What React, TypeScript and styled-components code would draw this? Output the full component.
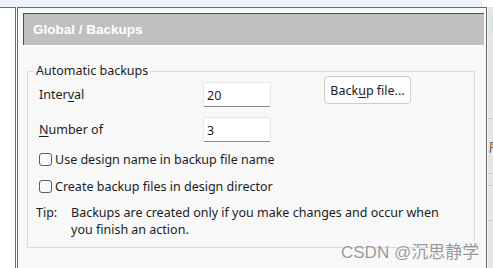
import styled, { createGlobalStyle } from 'styled-components'

const GlobalStyle = createGlobalStyle`
  html, body {
    margin: 0;
    padding: 0;
    background: #ffffff;
  }
  body {
    width: 493px;
    height: 268px;
    overflow: hidden;
    font-family: "Noto Sans", "Open Sans", sans-serif;
  }
`

function Checkbox({ label }: { label: string }) {
  return (
    <CheckRow>
      <CheckBox type="checkbox" />
      <span>{label}</span>
    </CheckRow>
  )
}

export default function App() {
  return (
    <Screen>
      <GlobalStyle />
      <TopStrip />
      <Main>
        <LeftPane />
        <Divider />
        <Dialog>
          <Header>
            <HeaderTitle>Global / Backups</HeaderTitle>
          </Header>
          <GroupBox>
            <Legend>Automatic backups</Legend>
            <FieldsRow>
              <Fields>
                <FieldRow>
                  <FieldLabel>
                    Inter<u>v</u>al
                  </FieldLabel>
                  <TextInput defaultValue="20" />
                </FieldRow>
                <FieldRow>
                  <FieldLabel>
                    <u>N</u>umber of
                  </FieldLabel>
                  <TextInput defaultValue="3" />
                </FieldRow>
              </Fields>
              <Button>
                Back<u>u</u>p file...
              </Button>
            </FieldsRow>
            <Checkbox label="Use design name in backup file name" />
            <Checkbox label="Create backup files in design director" />
            <TipRow>
              <TipLabel>Tip:</TipLabel>
              <TipText>
                Backups are created only if you make changes and occur when
                you finish an action.
              </TipText>
            </TipRow>
          </GroupBox>
        </Dialog>
        <RightStrip>
          <GreenBand />
          <StripCell $height={83} />
          <StripCell $height={54}>
            <StripGlyph>序</StripGlyph>
          </StripCell>
          <StripCell $height={11} />
          <StripCell $height={34} />
        </RightStrip>
      </Main>
      <Watermark>CSDN @沉思静学</Watermark>
    </Screen>
  )
}

const Screen = styled.div`
  position: relative;
  width: 493px;
  height: 268px;
  overflow: hidden;
  display: flex;
  flex-direction: column;
  color: #1c1c24;
  font-size: 12.5px;
`

const TopStrip = styled.div`
  height: 7px;
  flex: none;
  background: #eef2fa;
  margin-right: 11px;
  border-right: 1px solid #e0e3ea;
`

const Main = styled.div`
  flex: 1;
  display: flex;
  min-height: 0;
`

const LeftPane = styled.div`
  width: 15px;
  flex: none;
  background: #ffffff;
  border-top: 1px solid #707070;
  border-right: 1px solid #6a6a6a;
`

const Divider = styled.div`
  width: 1px;
  flex: none;
  background: #ffffff;
`

const Dialog = styled.section`
  width: 461px;
  flex: none;
  background: #f8f8f8;
  border: 1px solid #6a6a6a;
  border-bottom: none;
  padding: 5px 2px 0 5px;
  display: flex;
  flex-direction: column;
`

const Header = styled.div`
  height: 32px;
  box-sizing: border-box;
  background: #c0c0c0;
  border-top: 1px solid #505050;
  border-left: 1px solid #505050;
  display: flex;
  align-items: center;
  padding: 0 0 1px 9px;
`

const HeaderTitle = styled.div`
  color: #ffffff;
  font-family: "Liberation Sans", Arial, sans-serif;
  font-weight: 700;
  font-size: 13.5px;
`

const GroupBox = styled.fieldset`
  margin: 18px 9px 0 4px;
  padding: 0 0 9px 0;
  border: 1px solid #dcdcdc;
  min-width: 0;
  display: flex;
  flex-direction: column;
`

const Legend = styled.legend`
  margin-left: 6px;
  padding: 0 2px;
  line-height: 16px;
  font-size: 12.5px;
`

const FieldsRow = styled.div`
  display: flex;
  align-items: flex-start;
  padding-left: 11px;
  margin-top: -3px;
`

const Fields = styled.div`
  display: flex;
  flex-direction: column;
  gap: 10px;
  padding-top: 6px;
`

const FieldRow = styled.div`
  display: flex;
  align-items: center;
  height: 25px;
`

const FieldLabel = styled.label`
  width: 164px;
  line-height: 16px;
  padding-top: 1px;

  u {
    text-underline-offset: 2px;
  }
`

const TextInput = styled.input`
  box-sizing: border-box;
  width: 68px;
  height: 25px;
  margin: 0;
  padding: 1px 3px 0;
  background: #ffffff;
  border: 1px solid #e6e6e6;
  border-bottom: 1px solid #8a8a8a;
  border-radius: 2px;
  font-family: "Noto Sans", sans-serif;
  font-size: 12.5px;
  color: #1c1c24;
  outline: none;
`

const Button = styled.button`
  box-sizing: border-box;
  margin-left: 53px;
  width: 87px;
  height: 28px;
  padding: 0;
  background: #fdfdfd;
  border: 1px solid #cdcdcd;
  border-radius: 4px;
  font-family: "Noto Sans", sans-serif;
  font-size: 12.5px;
  color: #1c1c24;

  u {
    text-underline-offset: 2px;
  }
`

const CheckRow = styled.label`
  display: flex;
  align-items: center;
  gap: 3px;
  height: 16px;
  padding-left: 11px;
  margin-top: 9px;

  & + & {
    margin-top: 11px;
  }
`

const CheckBox = styled.input`
  appearance: none;
  box-sizing: border-box;
  width: 13px;
  height: 13px;
  margin: 0;
  border: 1px solid #5c5c5c;
  border-radius: 3px;
  background: #fafafa;
`

const TipRow = styled.div`
  display: flex;
  margin-top: 10px;
  padding-left: 8px;
  line-height: 17px;
`

const TipLabel = styled.div`
  width: 35px;
  flex: none;
`

const TipText = styled.div`
  width: 376px;
`

const RightStrip = styled.div`
  width: 13px;
  flex: none;
  background: #e6e6e6;
  border-left: 1px solid #f4f4f4;
  display: flex;
  flex-direction: column;
  overflow: hidden;
`

const GreenBand = styled.div`
  height: 22px;
  margin-top: 6px;
  margin-left: 2px;
  background: #dbe6dc;
`

const StripCell = styled.div<{ $height: number }>`
  height: ${({ $height }) => $height}px;
  border-bottom: 1px solid #cbcbcb;
  display: flex;
  align-items: center;
`

const StripGlyph = styled.span`
  margin-left: 1px;
  font-family: "Noto Sans CJK SC", sans-serif;
  font-size: 12px;
  color: #333333;
`

const Watermark = styled.div`
  position: absolute;
  left: 341px;
  top: 238px;
  font-family: "Liberation Sans", "Noto Sans CJK SC", sans-serif;
  font-size: 17px;
  color: rgba(120, 120, 120, 0.75);
  text-shadow: 0 0 1px rgba(255, 255, 255, 0.8);
  white-space: nowrap;
`
